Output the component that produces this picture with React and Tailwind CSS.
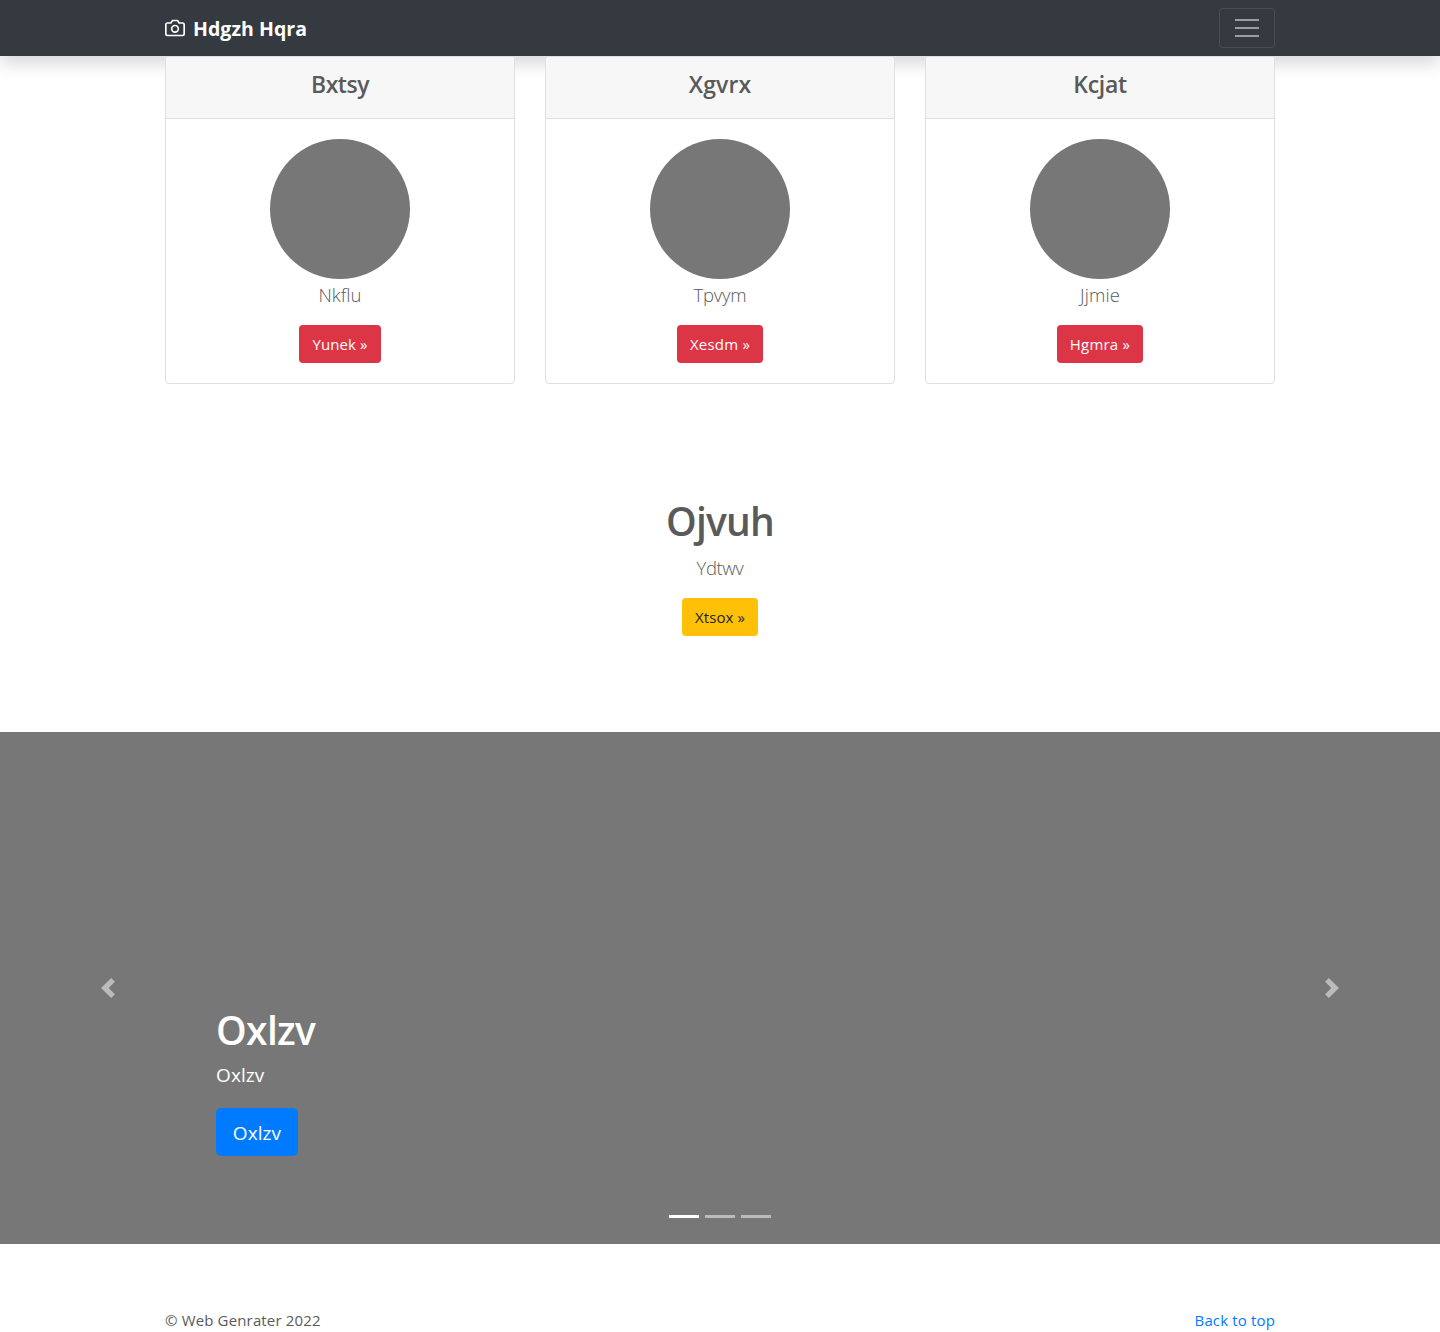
const cards = [
  { title: 'Bxtsy', text: 'Nkflu', action: 'Yunek »', width: 'w-[82px]', titleStyle: 'tracking-[-0.5px]', textStyle: 'tracking-[0px]', actionStyle: 'tracking-[0.1px]' },
  { title: 'Xgvrx', text: 'Tpvym', action: 'Xesdm »', width: 'w-[86px]', titleStyle: 'tracking-[0.1px]', textStyle: 'tracking-[-0.2px]', actionStyle: 'tracking-[0.2px]' },
  { title: 'Kcjat', text: 'Jjmie', action: 'Hgmra »', width: 'w-[86px]', titleStyle: 'tracking-[-0.3px]', textStyle: 'tracking-[0.1px]', actionStyle: 'tracking-[0.2px]' },
];

function CameraIcon() {
  return (
    <svg width="20" height="20" viewBox="0 0 24 24" fill="none" stroke="currentColor" strokeWidth="2" strokeLinecap="round" strokeLinejoin="round" className="mr-2">
      <path d="M23 19a2 2 0 0 1-2 2H3a2 2 0 0 1-2-2V8a2 2 0 0 1 2-2h4l2-3h6l2 3h4a2 2 0 0 1 2 2z" />
      <circle cx="12" cy="13" r="4" />
    </svg>
  );
}

function Navbar() {
  return (
    <header className="h-14 bg-[#343a40] shadow-[0_8px_16px_rgba(0,0,0,0.15)]">
      <div className="mx-auto flex h-full w-[1110px] items-center justify-between">
        <a href="#" className="flex items-center text-white">
          <CameraIcon />
          <strong className="pt-0.5 text-[19.5px] leading-[30px] font-bold tracking-[0.05px]">Hdgzh Hqra</strong>
        </a>
        <button aria-label="Menu" className="flex h-10 w-14 items-center justify-center rounded border border-white/10">
          <svg width="30" height="30" viewBox="0 0 30 30" stroke="rgba(255,255,255,0.5)" strokeWidth="2" strokeMiterlimit="10">
            <path d="M3 7h24M3 15h24M3 23h24" />
          </svg>
        </button>
      </div>
    </header>
  );
}

function Card({ card }) {
  return (
    <article className="h-[328px] rounded border border-[#dfdfdf] bg-white text-center">
      <div className="h-[62px] rounded-t-[3px] border-b border-[#dfdfdf] bg-[#f7f7f7] pt-[13px]">
        <h4 className={`text-[23px] leading-[29px] font-semibold ${card.titleStyle}`}>{card.title}</h4>
      </div>
      <div className="flex flex-col items-center pt-5">
        <div className="size-[140px] rounded-full bg-[#777]" />
        <p className={`mb-[15px] pt-px text-[18.5px] leading-[30px] font-light ${card.textStyle}`}>{card.text}</p>
        <a href="#" className={`h-[38px] rounded bg-[#dc3545] text-[15px] leading-[38px] whitespace-nowrap text-white ${card.width} ${card.actionStyle}`}>{card.action}</a>
      </div>
    </article>
  );
}

function Carousel() {
  return (
    <section className="flex h-[512px] flex-col bg-[#777] text-white">
      <div className="relative flex-1">
        <button aria-label="Previous" className="absolute top-[246px] left-[98px] opacity-50">
          <svg width="20" height="20" viewBox="0 0 8 8" fill="#fff"><path d="M5.25 0l-4 4 4 4 1.5-1.5-2.5-2.5 2.5-2.5-1.5-1.5z" /></svg>
        </button>
        <button aria-label="Next" className="absolute top-[246px] right-[98px] opacity-50">
          <svg width="20" height="20" viewBox="0 0 8 8" fill="#fff"><path d="M2.75 0l-1.5 1.5 2.5 2.5-2.5 2.5 1.5 1.5 4-4-4-4z" /></svg>
        </button>
        <div className="ml-[216px] pt-[274px]">
          <h1 className="mb-1.5 text-[39px] leading-[48px] font-semibold tracking-[-0.65px]">Oxlzv</h1>
          <p className="mb-[18px] text-[19px] leading-[30px] tracking-[0.1px]">Oxlzv</p>
          <a href="#" className="flex h-12 w-[82px] items-center justify-center rounded-[5px] bg-[#007bff] pt-0.5 text-[19px] tracking-[0.1px]">Oxlzv</a>
        </div>
      </div>
      <div className="mb-[26px] flex justify-center gap-1.5">
        <span className="h-[3px] w-[30px] bg-white" />
        <span className="h-[3px] w-[30px] bg-white/50" />
        <span className="h-[3px] w-[30px] bg-white/50" />
      </div>
    </section>
  );
}

export default function App() {
  return (
    <div className="flex h-[1332px] flex-col overflow-hidden bg-white font-['Open_Sans','Noto_Sans',sans-serif] text-[#5a5a5a]">
      <Navbar />
      <main>
        <section className="relative mx-auto grid w-[1110px] grid-cols-3 gap-[30px]">
          {cards.map((card) => <Card key={card.title} card={card} />)}
        </section>
        <section className="flex h-[348px] flex-col items-center pt-[113px]">
          <h1 className="mb-[7px] text-[39px] leading-[48px] font-semibold tracking-[-0.8px]">Ojvuh</h1>
          <p className="mb-[15px] pt-px text-[18.5px] leading-[30px] font-light tracking-[-0.4px]">Ydtwv</p>
          <a href="#" className="h-[38px] w-[76px] rounded bg-[#ffc107] text-center text-[15px] leading-[38px] whitespace-nowrap tracking-[0.1px] text-[#212529]">Xtsox »</a>
        </section>
        <Carousel />
      </main>
      <footer className="mx-auto flex w-[1110px] justify-between pt-16 text-[15px] leading-6">
        <p className="tracking-[0.15px]">© Web Genrater 2022</p>
        <a href="#" className="tracking-[0.15px] text-[#007bff]">Back to top</a>
      </footer>
    </div>
  );
}
